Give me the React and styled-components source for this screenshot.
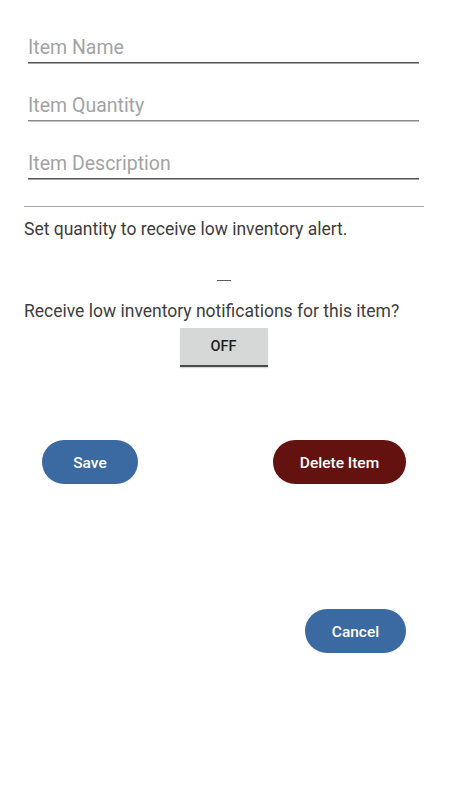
import React from 'react';
import styled, { createGlobalStyle } from 'styled-components';

const GlobalStyle = createGlobalStyle`
  body {
    margin: 0;
    background: #ffffff;
    font-family: Roboto, "Noto Sans", "Liberation Sans", sans-serif;
  }
`;

const Screen = styled.div`
  width: 449px;
  height: 797px;
  background: #ffffff;
  display: flex;
  flex-direction: column;
`;

const Fields = styled.div`
  display: flex;
  flex-direction: column;
  gap: 17px;
  padding: 22px 30px 0 28px;
`;

const Field = styled.div`
  height: 40px;
  border-bottom: 1px solid ${({ $light }) => ($light ? '#8a8a8a' : '#55555c')};
  box-shadow: 0 1px 0 ${({ $light }) => ($light ? '#c4c4c4' : '#a4a4a8')};
  display: flex;
  align-items: flex-end;
`;

const Placeholder = styled.span`
  font-size: 19.5px;
  line-height: 23px;
  color: #a3a3a3;
  padding-bottom: 3px;
`;

const Divider = styled.hr`
  margin: 27px 25px 0 24px;
  border: none;
  border-top: 1px solid #a8a8a8;
  height: 0;
`;

const Label = styled.p`
  margin: ${({ $top }) => $top}px 0 0 24px;
  font-size: 17.5px;
  line-height: 21px;
  color: #3d3d3d;
`;

const Center = styled.div`
  display: flex;
  justify-content: center;
  padding-right: 2px;
  margin-top: ${({ $top }) => $top}px;
`;

const ThresholdInput = styled.div`
  width: 14px;
  height: 1px;
  background: #5a5a5a;
`;

const Toggle = styled.button`
  width: 88px;
  height: 39px;
  border: none;
  border-bottom: 2px solid #4a4a4a;
  background: #d6d7d7;
  color: #1e1e1e;
  font-family: inherit;
  font-size: 14.5px;
  font-weight: 500;
  padding: 0;
  box-shadow: 0 1px 1px rgba(0, 0, 0, 0.15);
`;

const ActionRow = styled.div`
  display: flex;
  justify-content: space-between;
  padding: 0 43px 0 42px;
  margin-top: ${({ $top }) => $top}px;
`;

const EndRow = styled.div`
  display: flex;
  justify-content: flex-end;
  padding: 0 43px 0 0;
  margin-top: ${({ $top }) => $top}px;
`;

const Pill = styled.button`
  width: ${({ $w }) => $w}px;
  height: 44px;
  border: none;
  border-radius: 22px;
  background: ${({ $danger }) => ($danger ? '#64120f' : '#3a6aa1')};
  color: #ffffff;
  font-family: inherit;
  font-size: 15.5px;
  font-weight: 500;
  padding: 2px 0 0;
`;

export default function App() {
  return (
    <>
      <GlobalStyle />
      <Screen>
        <Fields>
          <Field>
            <Placeholder>Item Name</Placeholder>
          </Field>
          <Field $light>
            <Placeholder>Item Quantity</Placeholder>
          </Field>
          <Field>
            <Placeholder>Item Description</Placeholder>
          </Field>
        </Fields>
        <Divider />
        <Label $top={12}>Set quantity to receive low inventory alert.</Label>
        <Center $top={40}>
          <ThresholdInput />
        </Center>
        <Label $top={20}>Receive low inventory notifications for this item?</Label>
        <Center $top={6}>
          <Toggle>OFF</Toggle>
        </Center>
        <ActionRow $top={73}>
          <Pill $w={96}>Save</Pill>
          <Pill $w={133} $danger>
            Delete Item
          </Pill>
        </ActionRow>
        <EndRow $top={125}>
          <Pill $w={101}>Cancel</Pill>
        </EndRow>
      </Screen>
    </>
  );
}
